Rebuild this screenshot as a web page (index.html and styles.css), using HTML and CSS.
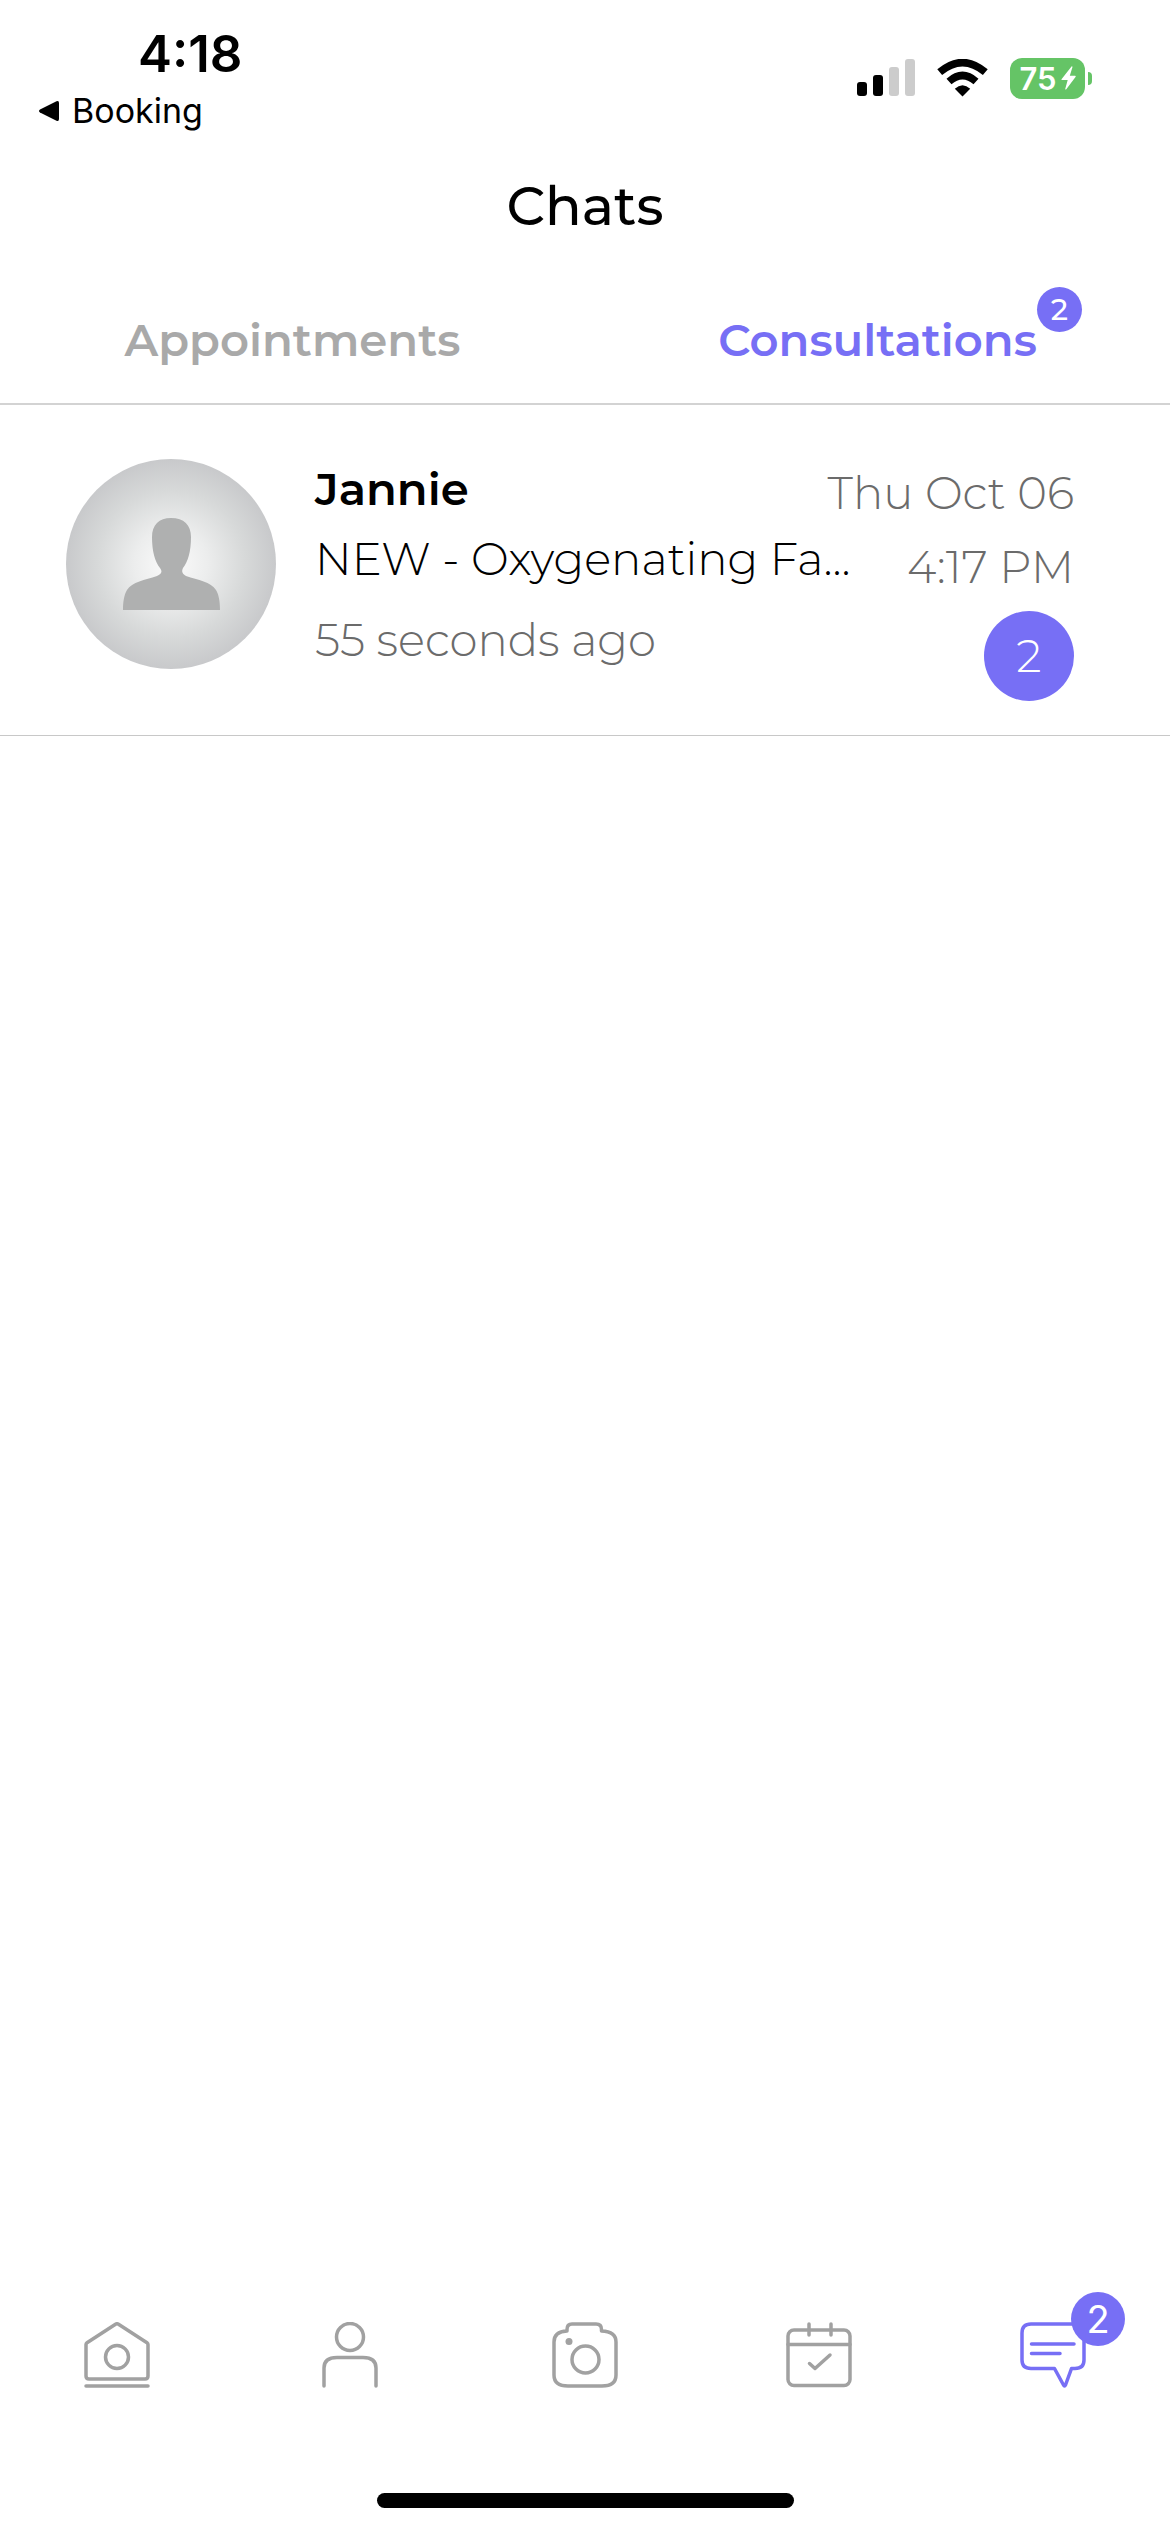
FILE: index.html
```
<!DOCTYPE html>
<html lang="en">
<head>
    <meta charset="UTF-8">
    <meta name="viewport" content="width=device-width, initial-scale=1.0">
    <title>Chats</title>
    <link rel="stylesheet" href="styles.css">
</head>
<body>
    <div class="status-bar">
        <div class="status-left">
            <div class="time">4:18</div>
            <a class="back-link" href="#">
                <svg width="22" height="22" viewBox="0 0 22 22"><path d="M2 9.500 18.500 1.300Q21 .3 21 3V19Q21 21.700 18.500 20.700L2 12.500Q0 11 2 9.500Z"/></svg>
                Booking
            </a>
        </div>
        <div class="status-right">
            <svg width="58" height="38" viewBox="0 0 58 38">
                <rect x="0" y="23" width="10" height="14" rx="3"/>
                <rect x="16" y="16" width="10" height="21" rx="3"/>
                <rect x="32" y="8" width="10" height="29" rx="3" fill="#ccc"/>
                <rect x="48" y="0" width="10" height="37" rx="3" fill="#ccc"/>
            </svg>
            <svg width="51" height="38" viewBox="0 0 51 38">
                <path d="M25.500 37.500 17.800 29.800Q25.500 22.500 33.200 29.800Z"/>
                <path d="M12 22.500Q25.500 10.500 39 22.500" fill="none" stroke="#000" stroke-width="7.500"/>
                <path d="M2.700 13.200Q25.500-6 48.300 13.200" fill="none" stroke="#000" stroke-width="7.500"/>
            </svg>
            <div class="battery">
                <div class="battery-level">
                    75
                    <svg width="15" height="24" viewBox="0 0 15 24"><path d="M10.500.5.5 13.200Q0 14 1 14H6.700L4.200 23Q4.500 24 5.300 23.300L14.700 10.700Q15 9.800 14 9.800H8.800L11.500 1Q11.300 0 10.500.5Z" fill="#fff"/></svg>
                </div>
                <div class="battery-cap"></div>
            </div>
        </div>
    </div>

    <h1 class="title">Chats</h1>

    <div class="tabs">
        <button class="tab">Appointments</button>
        <button class="tab active"><span class="tab-label">Consultations<span class="tab-badge">2</span></span></button>
    </div>

    <main class="chat-list">
        <a class="chat" href="#">
            <svg class="avatar" viewBox="0 0 210 210">
                <defs>
                    <radialGradient id="avatar-bg">
                        <stop offset="0" stop-color="#fbfbfb"/>
                        <stop offset=".35" stop-color="#eceded"/>
                        <stop offset=".7" stop-color="#d7d9d9"/>
                        <stop offset="1" stop-color="#c8c9cb"/>
                    </radialGradient>
                </defs>
                <circle cx="105" cy="105" r="105" fill="url(#avatar-bg)"/>
                <path d="M105 59C118 59 125 66 125 78C125 92 122 103 117 109C115 113 117 115 120 117C132 121 145 123 150 131C153 136 154 143 154 151H57C57 143 58 136 61 131C66 123 79 121 91 117C95 115 97 113 94 109C89 103 86 92 86 78C86 66 93 59 105 59Z" fill="#afb0b0"/>
            </svg>
            <div class="chat-text">
                <div class="chat-name">Jannie</div>
                <div class="chat-preview">NEW - Oxygenating Fa...</div>
                <div class="chat-ago">55 seconds ago</div>
            </div>
            <div class="chat-meta">
                <div>Thu Oct 06</div>
                <div>4:17 PM</div>
                <div class="unread">2</div>
            </div>
        </a>
    </main>

    <nav class="tab-bar">
        <a href="#" aria-label="Home">
            <svg class="icon" viewBox="0 0 66 66">
                <path d="M2 22.500Q2 21.500 3 20.800L31.500 2.200Q33 1.300 34.500 2.200L63 20.800Q64 21.500 64 22.500V54Q64 57 61 57H5Q2 57 2 54ZM2 64H64"/>
                <circle cx="33" cy="35" r="11.500"/>
            </svg>
        </a>
        <a href="#" aria-label="Profile">
            <svg class="icon" viewBox="0 0 66 66">
                <circle cx="32" cy="15" r="13.500"/>
                <path d="M6 64V46Q6 35.500 19 35.500H45Q58 35.500 58 46V64"/>
            </svg>
        </a>
        <a href="#" aria-label="Camera">
            <svg class="icon" viewBox="0 0 66 66">
                <path d="M15 9V7.500Q15 2 20 2H44Q49.500 2 49.500 7.500V9Q64 9.500 64 20V53Q64 64 50 64H16Q2 64 2 53V20Q2 9.500 15 9Z"/>
                <circle cx="33.500" cy="37.500" r="13.500"/>
                <circle class="dot" cx="17" cy="19.500" r="3.500"/>
            </svg>
        </a>
        <a href="#" aria-label="Calendar">
            <svg class="icon" viewBox="0 0 66 66">
                <rect x="2" y="8" width="62" height="55.500" rx="6"/>
                <path d="M2 22.500H64M23 2V13M45 2V13M23.500 41.500 29 46.500 44 33"/>
            </svg>
        </a>
        <a class="active" href="#" aria-label="Chats">
            <span class="icon-wrap">
                <svg class="icon" viewBox="0 0 66 66">
                    <path d="M11 2H55Q64 2 64 11V38Q64 46.500 55 46.500H51.500L45.500 63Q44.500 65 43.500 63L34.500 46.500H11Q2 46.500 2 38V11Q2 2 11 2ZM11.500 22H54M11.500 31.500H40"/>
                </svg>
                <span class="nav-badge">2</span>
            </span>
        </a>
    </nav>
    <div class="home-indicator"></div>
</body>
</html>
```
FILE: styles.css
```
* {
    box-sizing: border-box;
}
body {
    margin: 0;
    min-height: 100vh;
    display: flex;
    flex-direction: column;
    background-color: #fff;
    color: #000;
    font-family: Montserrat, Inter, sans-serif;
}
a {
    color: inherit;
    text-decoration: none;
}
svg {
    display: block;
}
.status-bar {
    display: flex;
    justify-content: space-between;
    padding: 27px 78px 0 38px;
    font-family: Inter, sans-serif;
}
.time {
    margin-left: 100px;
    font-size: 51px;
    font-weight: 600;
    line-height: 54px;
}
.back-link {
    display: flex;
    align-items: center;
    gap: 12px;
    margin-top: 10px;
    font-size: 34px;
    font-weight: 400;
    line-height: 40px;
}
.status-right {
    display: flex;
    align-items: center;
    gap: 22px;
    height: 102px;
}
.battery {
    display: flex;
    align-items: center;
    gap: 3px;
}
.battery-level {
    display: flex;
    align-items: center;
    justify-content: center;
    gap: 4px;
    width: 75px;
    height: 41px;
    border-radius: 12px;
    background-color: #65c466;
    color: #fff;
    font-size: 31px;
    font-weight: 600;
}
.battery-cap {
    width: 4px;
    height: 13px;
    border-radius: 0 6px 6px 0;
    background-color: #65c466;
}
.title {
    margin: 45px 0 44px;
    font-size: 54px;
    font-weight: 500;
    line-height: 60px;
    text-align: center;
}
.tabs {
    display: flex;
    border-bottom: 2px solid #d3d3d3;
}
.tab {
    flex: 1;
    padding: 30px 0 33px;
    border: 0;
    background: none;
    color: #a9a9a9;
    font: inherit;
    font-size: 45px;
    font-weight: 600;
    line-height: 60px;
    cursor: pointer;
}
.tab.active {
    color: #776ff5;
}
.tab-label {
    position: relative;
}
.tab-badge {
    position: absolute;
    left: 100%;
    top: -25px;
    width: 45px;
    height: 45px;
    border-radius: 50%;
    background-color: #776ff5;
    color: #fff;
    font-size: 30px;
    font-weight: 500;
    line-height: 45px;
    text-align: center;
}
.chat-list {
    flex: 1;
}
.chat {
    display: flex;
    align-items: flex-start;
    padding: 54px 96px 34px 66px;
    border-bottom: 1px solid #c8c8c8;
    font-size: 45px;
    font-weight: 300;
    line-height: 60px;
    white-space: nowrap;
}
.avatar {
    flex: none;
    width: 210px;
    height: 210px;
    margin-right: 39px;
}
.chat-text {
    flex: 1;
    min-width: 0;
}
.chat-name {
    margin-bottom: 10px;
    font-weight: 600;
}
.chat-preview {
    overflow: hidden;
    text-overflow: ellipsis;
}
.chat-ago {
    margin-top: 21px;
    color: #6b6b6b;
}
/* the date may reach over the end of the preview column */
.chat-meta {
    display: flex;
    flex-direction: column;
    align-items: flex-end;
    gap: 14px;
    width: 200px;
    padding-top: 4px;
    color: #6b6b6b;
}
.unread {
    width: 90px;
    height: 90px;
    border-radius: 50%;
    background-color: #776ff5;
    color: #fff;
    line-height: 90px;
    text-align: center;
}
.tab-bar {
    display: flex;
    padding-bottom: 105px;
    color: #a1a1a1;
}
.tab-bar a {
    flex: 1;
    display: flex;
    justify-content: center;
}
.tab-bar .active {
    color: #776ff5;
}
.icon {
    width: 66px;
    height: 66px;
    fill: none;
    stroke: currentColor;
    stroke-width: 3.5;
    stroke-linecap: round;
    stroke-linejoin: round;
}
.icon .dot {
    fill: currentColor;
    stroke: none;
}
.icon-wrap {
    position: relative;
}
.nav-badge {
    position: absolute;
    left: 51px;
    top: -30px;
    width: 54px;
    height: 54px;
    border-radius: 50%;
    background-color: #776ff5;
    color: #fff;
    font-family: Inter, sans-serif;
    font-size: 38px;
    line-height: 54px;
    text-align: center;
}
.home-indicator {
    align-self: center;
    width: 417px;
    height: 15px;
    margin-bottom: 24px;
    border-radius: 8px;
    background-color: #000;
}
```
